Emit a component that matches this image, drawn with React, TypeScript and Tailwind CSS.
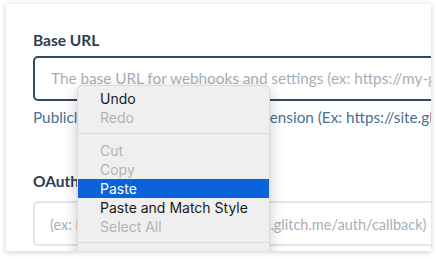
import React from 'react';

type MenuItem = { label: string; enabled?: boolean; active?: boolean } | 'sep';

const menu: MenuItem[] = [
  { label: 'Undo', enabled: true },
  { label: 'Redo' },
  'sep',
  { label: 'Cut' },
  { label: 'Copy' },
  { label: 'Paste', enabled: true, active: true },
  { label: 'Paste and Match Style', enabled: true },
  { label: 'Select All' },
  'sep',
  { label: 'Speech' },
];

function ContextMenu() {
  return (
    <div className="absolute left-[71px] top-[81px] w-[193px] rounded-[5px] border border-black/[0.08] bg-[#efefef] pt-[3px] pb-[4px] shadow-[0_4px_14px_rgba(0,0,0,0.22)] font-['Inter','Noto_Sans',sans-serif] text-[14px]">
      {menu.map((m, i) =>
        m === 'sep' ? (
          <div key={i} className="pt-[6px] pb-[7px]">
            <div className="h-px bg-[#d9d9d9]" />
          </div>
        ) : (
          <div
            key={i}
            className={
              'flex h-[19px] items-center pl-[22px] leading-none ' +
              (m.active ? 'bg-[#0a63d9] text-white' : m.enabled ? 'text-[#1a1a1a]' : 'text-[#b3b3b3]')
            }
          >
            {m.label}
          </div>
        )
      )}
    </div>
  );
}

export default function App() {
  return (
    <div className="h-[259px] w-[437px] overflow-hidden bg-white font-['Lato','Open_Sans',sans-serif]">
      <div className="relative ml-[6px] mt-[4px] h-[247px] w-[425px] overflow-hidden bg-white shadow-[0_1px_6px_rgba(0,0,0,0.2)]">
        <div className="pl-[27px] pt-[26px]">
          <div className="text-[15.5px] font-bold leading-[20px] text-[#2c3e50]">Base URL</div>
          <div className="mt-[6px] flex h-[45px] w-[440px] items-center rounded-[5px] border-2 border-[#34495e] pl-[15px] text-[15.3px] whitespace-nowrap">
            <span className="mr-px h-[20px] w-px bg-[#3f4a57]" />
            <span className="text-[#a5afba]">The base URL for webhooks and settings (ex: https://my-glitch-app.glitch.me)</span>
          </div>
          <div className="mt-[6px] whitespace-nowrap text-[15.3px] leading-[20px] text-[#4a6f95]">
            Publicly accessible URL for your extension (Ex: https://site.glitch.me)
          </div>
          <div className="mt-[44px] text-[15.5px] font-bold leading-[20px] text-[#2c3e50]">OAuth Callback URL</div>
          <div className="mt-[10px] flex h-[45px] w-[440px] items-center rounded-[5px] border-2 border-[#dfe6ed] pl-[15px] pt-[2px] text-[14.5px] whitespace-nowrap">
            <span className="text-[#a5afba]">(ex: https://my-glitch-project-name.glitch.me/auth/callback)</span>
          </div>
        </div>
        <ContextMenu />
      </div>
    </div>
  );
}
